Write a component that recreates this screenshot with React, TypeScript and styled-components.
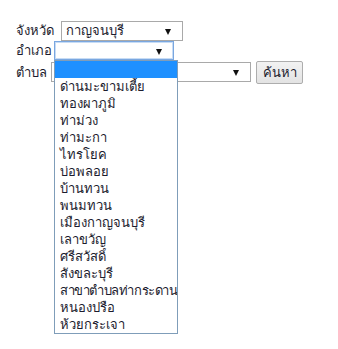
import React from "react";
import styled, { createGlobalStyle } from "styled-components";

const Global = createGlobalStyle`
  html, body, #root { margin: 0; padding: 0; background: #fff; min-height: 100%; height: 100%; }
  body {
    font-family: Tahoma, "Noto Sans", "DejaVu Sans", sans-serif;
    font-size: 13px;
    color: #1c1c2e;
  }
`;

const Form = styled.div`
  position: relative;
  box-sizing: border-box;
  min-height: 349px;
  padding: 21px 0 0 16px;
  display: flex;
  flex-direction: column;
  gap: 1px;
`;

const Row = styled.div<{ $gap: number; $h?: number }>`
  display: flex;
  align-items: center;
  height: ${(p) => p.$h ?? 19}px;
  gap: ${(p) => p.$gap}px;
`;

const Label = styled.span`
  line-height: 19px;
  white-space: nowrap;
`;

const Select = styled.div<{ $w: number; $focus?: boolean }>`
  position: relative;
  box-sizing: border-box;
  width: ${(p) => p.$w}px;
  height: ${(p) => (p.$focus ? 19 : 20)}px;
  border: 1px solid ${(p) => (p.$focus ? "#7aa7e0" : "#a9a9a9")};
  ${(p) => (p.$focus ? "box-shadow: inset 0 0 0 1px #c7dcf5;" : "")}
  background: #fff;
  display: flex;
  align-items: center;
  padding: 0 4px;
  line-height: 17px;
`;

const Arrow = styled.span`
  position: absolute;
  right: 11px;
  top: 50%;
  margin-top: -2px;
  width: 0;
  height: 0;
  border-left: 3.5px solid transparent;
  border-right: 3.5px solid transparent;
  border-top: 6px solid #111;
`;

const Button = styled.button`
  box-sizing: border-box;
  height: 23px;
  width: 47px;
  margin-left: 1px;
  padding: 0;
  font: inherit;
  color: #1c1c2e;
  border: 1px solid #adadad;
  border-radius: 2px;
  background: linear-gradient(#f2f2f2, #e3e3e3);
`;

const Anchor = styled.div`
  position: relative;
  z-index: 5;
`;

const List = styled.div`
  position: absolute;
  left: 0;
  top: 19px;
  box-sizing: border-box;
  width: 124px;
  height: 274px;
  border: 1px solid #7f9db9;
  background: #fff;
`;

const Item = styled.div<{ $active?: boolean; $tight?: boolean }>`
  height: 17px;
  line-height: 17px;
  padding-left: 5px;
  white-space: nowrap;
  overflow: hidden;
  letter-spacing: ${(p) => (p.$tight ? "-0.45px" : "normal")};
  background: ${(p) => (p.$active ? "#1e90ff" : "transparent")};
  color: ${(p) => (p.$active ? "#fff" : "#1c1c2e")};
`;

const amphoe = [
  "",
  "ด่านมะขามเตี้ย",
  "ทองผาภูมิ",
  "ท่าม่วง",
  "ท่ามะกา",
  "ไทรโยค",
  "บ่อพลอย",
  "บ้านทวน",
  "พนมทวน",
  "เมืองกาญจนบุรี",
  "เลาขวัญ",
  "ศรีสวัสดิ์",
  "สังขละบุรี",
  "สาขาตำบลท่ากระดาน",
  "หนองปรือ",
  "ห้วยกระเจา",
];

export default function App() {
  return (
    <>
      <Global />
      <Form>
        <Row $gap={7}>
          <Label>จังหวัด</Label>
          <Select $w={122}>
            กาญจนบุรี
            <Arrow />
          </Select>
        </Row>
        <Row $gap={2}>
          <Label>อำเภอ</Label>
          <Anchor>
            <Select $w={120} $focus>
              <Arrow />
            </Select>
            <List>
              {amphoe.map((a, i) => (
                <Item key={i} $active={i === 0} $tight={a.length > 14}>
                  {a}
                </Item>
              ))}
            </List>
          </Anchor>
        </Row>
        <Row $gap={4} $h={22}>
          <Label>ตำบล</Label>
          <Select $w={200}>
            <Arrow />
          </Select>
          <Button>ค้นหา</Button>
        </Row>
      </Form>
    </>
  );
}
